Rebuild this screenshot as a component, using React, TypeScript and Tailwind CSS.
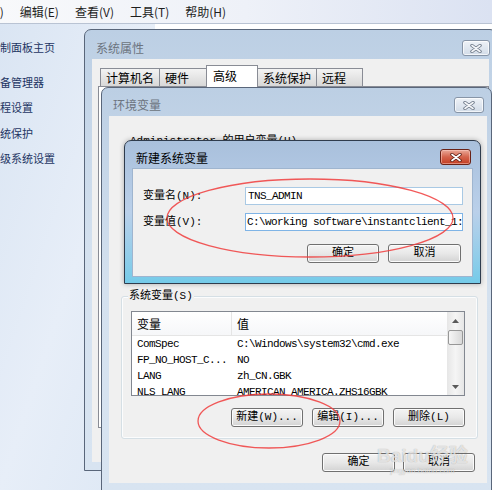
import type { ReactNode } from 'react';

const cjk = "font-['Noto_Sans_CJK_SC',sans-serif]";
const song = "font-['Liberation_Mono','Noto_Sans_CJK_SC',monospace]";

function CloseButton({ active = false, className = '' }: { active?: boolean; className?: string }) {
  return (
    <div
      className={`flex items-center justify-center rounded-[3px] border ${
        active
          ? 'border-[#6a2216] bg-linear-to-b from-[#e9a898] via-[#d4634b] to-[#c23d22] shadow-[inset_0_0_0_1px_rgba(255,210,200,0.5)]'
          : 'border-[#8795a7] bg-linear-to-b from-[#eef2f7] to-[#d2dce8] shadow-[inset_0_0_0_1px_rgba(255,255,255,0.7)]'
      } ${className}`}
    >
      <svg width="14" height="9" viewBox="0 0 14 9">
        <path d="M3 1.5 L11 7.5 M11 1.5 L3 7.5" stroke={active ? '#5a1a10' : '#6b7686'} strokeWidth="3.4" strokeLinecap="round" />
        <path d="M3 1.5 L11 7.5 M11 1.5 L3 7.5" stroke={active ? '#ffffff' : '#f3f5f8'} strokeWidth="1.7" strokeLinecap="round" />
      </svg>
    </div>
  );
}

function Btn({ className = '', children }: { className?: string; children: ReactNode }) {
  return (
    <div
      className={`flex h-[19px] items-center justify-center rounded-[3px] border border-[#707070] bg-linear-to-b from-[#f4f4f4] via-[#e8e8e8] to-[#d3d3d3] text-[11px] leading-none text-black shadow-[inset_0_0_0_1px_#fbfbfb] ${song} ${className}`}
    >
      {children}
    </div>
  );
}

const sysVars = [
  { name: 'ComSpec', value: 'C:\\Windows\\system32\\cmd.exe' },
  { name: 'FP_NO_HOST_C...', value: 'NO' },
  { name: 'LANG', value: 'zh_CN.GBK' },
  { name: 'NLS_LANG', value: 'AMERICAN_AMERICA.ZHS16GBK' },
];

const tabClass =
  '-ml-px h-[18px] border border-b-0 border-[#898c95] bg-linear-to-b from-[#f3f3f3] to-[#d8d8d8] pl-[5px] leading-[17px]';

export default function App() {
  return (
    <div className={`relative h-[490px] w-[492px] overflow-hidden bg-white ${cjk}`}>
      {/* explorer menu bar */}
      <div className="flex h-[24px] items-center gap-[16px] border-b border-[#b9c3d3] bg-linear-to-r from-[#f8f9fb] via-[#eef1f8] to-[#dbe2f2] text-[12px] text-[#1e1e1e]">
        <span className="-ml-[35px]">文件(F)</span>
        <span>编辑(E)</span>
        <span>查看(V)</span>
        <span>工具(T)</span>
        <span>帮助(H)</span>
      </div>

      {/* control panel sidebar */}
      <div className="flex h-[466px]">
        <div className="w-[155px] bg-linear-to-br from-[#dae5f3] via-[#e7eef8] to-[#dce7f4] pt-[15px] text-[11px] text-[#1e3563]">
          <div className="-ml-[11px] leading-[16px]">控制面板主页</div>
          <div className="mt-[15px] flex flex-col">
            <div className="-ml-[11px] h-[25.3px] leading-[25px]">设备管理器</div>
            <div className="-ml-[11px] h-[25.3px] leading-[25px]">远程设置</div>
            <div className="-ml-[11px] h-[25.3px] leading-[25px]">系统保护</div>
            <div className="-ml-[11px] h-[25.3px] leading-[25px]">高级系统设置</div>
          </div>
        </div>
        <div className="flex-1 bg-white" />
      </div>

      {/* 系统属性 window */}
      <div className="absolute left-[84px] top-[29px] flex h-[442px] w-[413px] flex-col rounded-t-[7px] border border-[#59667a] bg-linear-to-b from-[#bccfe4] via-[#d4e1ef] to-[#d8e4f1]">
        <div className="flex h-[29px] shrink-0 items-start justify-between pl-[11px] pr-[6px]">
          <span className="mt-[11px] text-[12px] leading-[14px] text-[#6c7480]">系统属性</span>
          <CloseButton className="mt-[10px] h-[16px] w-[28px]" />
        </div>
        <div className="mx-[7px] h-[403px] bg-[#f0f0f0] pt-[6px]">
          <div className="flex h-[21px] items-end pl-[9px] text-[12px] text-black">
            <div className={`w-[60px] ${tabClass}`}>计算机名</div>
            <div className={`w-[48px] ${tabClass}`}>硬件</div>
            <div className="relative z-10 -mb-px -ml-px h-[22px] w-[52px] border border-b-0 border-[#898c95] bg-white pl-[6px] leading-[19px]">
              高级
            </div>
            <div className={`w-[60px] ${tabClass}`}>系统保护</div>
            <div className={`w-[47px] ${tabClass}`}>远程</div>
          </div>
          <div className="ml-[6px] h-[342px] border border-[#898c95] bg-white" />
        </div>
      </div>

      {/* 环境变量 window */}
      <div className="absolute left-[101px] top-[87px] flex h-[404px] w-[391px] flex-col rounded-t-[7px] border border-[#59667a] bg-linear-to-b from-[#bccfe4] via-[#d4e1ef] to-[#d8e4f1]">
        <div className="flex h-[28px] shrink-0 items-start justify-between pl-[11px] pr-[7px]">
          <span className="mt-[10px] text-[12px] leading-[14px] text-[#6c7480]">环境变量</span>
          <CloseButton className="mt-[9px] h-[16px] w-[30px]" />
        </div>
        <div className="ml-[7px] flex h-[367px] w-[378px] flex-col bg-[#f0f0f0]">
          <div className={`ml-[21px] mt-[18px] h-[14px] text-[11px] leading-[14px] text-black ${song}`}>
            Administrator 的用户变量(U)
          </div>
          <div className="h-[148px]" />

          {/* 系统变量 group */}
          <div className="relative ml-[12px] h-[143px] w-[357px] rounded-[3px] border border-[#d5dfe5] pl-[9px] pt-[14px] shadow-[inset_0_0_0_1px_#fbfcfd]">
            <span className={`absolute left-[6px] -top-[8px] bg-[#f0f0f0] px-px text-[11px] leading-[14px] text-black ${song}`}>
              系统变量(S)
            </span>
            <div className="flex h-[85px] w-[334px] border border-[#828790] bg-white">
              <div className="flex-1 overflow-hidden">
                <div className="flex h-[24px] border-b border-[#e5e5e5] bg-linear-to-b from-white to-[#f6f7f9] text-[12px] leading-[23px] text-black">
                  <div className="w-[100px] border-r border-[#e5e5e5] pl-[5px]">变量</div>
                  <div className="pl-[5px]">值</div>
                </div>
                {sysVars.map((v) => (
                  <div key={v.name} className={`flex h-[16px] text-[11px] leading-[16px] tracking-[-0.6px] text-black ${song}`}>
                    <div className="w-[100px] shrink-0 pl-[5px]">{v.name}</div>
                    <div className="whitespace-nowrap pl-[5px]">{v.value}</div>
                  </div>
                ))}
              </div>
              <div className="flex w-[17px] flex-col bg-linear-to-r from-[#e6e6e6] via-[#f5f5f5] to-[#e6e6e6]">
                <div className="flex h-[17px] items-center justify-center">
                  <svg width="7" height="4" viewBox="0 0 7 4">
                    <polygon points="0,4 3.5,0 7,4" fill="#5a5a5a" />
                  </svg>
                </div>
                <div className="mx-px mt-px h-[15px] rounded-[2px] border border-[#979797] bg-linear-to-r from-[#f6f6f6] to-[#d9d9d9]" />
                <div className="flex-1" />
                <div className="flex h-[17px] items-center justify-center">
                  <svg width="7" height="4" viewBox="0 0 7 4">
                    <polygon points="0,0 3.5,4 7,0" fill="#5a5a5a" />
                  </svg>
                </div>
              </div>
            </div>
            <div className="mt-[12px] flex w-[334px] justify-end gap-[9px]">
              <Btn className="w-[72px]">新建(W)...</Btn>
              <Btn className="w-[72px]">编辑(I)...</Btn>
              <Btn className="w-[72px]">删除(L)</Btn>
            </div>
          </div>

          <div className="mt-[14px] flex justify-end gap-[8px] pr-[12px]">
            <Btn className="w-[73px]">确定</Btn>
            <Btn className="w-[72px]">取消</Btn>
          </div>
        </div>
      </div>

      {/* 新建系统变量 window (active) */}
      <div className="absolute left-[124px] top-[140px] flex h-[144px] w-[357px] flex-col rounded-t-[7px] border border-[#2f3c4d] bg-linear-to-b from-[#a9c0dc] via-[#bad0ea] to-[#74cbe9] shadow-[0_0_5px_rgba(0,0,0,0.3)]">
        <div className="flex h-[27px] shrink-0 items-start justify-between pl-[11px] pr-[9px]">
          <span className="mt-[10px] text-[12px] leading-[14px] text-black">新建系统变量</span>
          <CloseButton active className="mt-[8px] h-[16px] w-[31px]" />
        </div>
        <div className={`ml-[7px] h-[109px] w-[341px] border border-[#9fb5cf] bg-[#f0f0f0] pt-[18px] text-[11px] text-black ${song}`}>
          <div className="flex h-[18px] items-center">
            <span className="ml-[10px] w-[102px]">变量名(N):</span>
            <div className="flex h-[18px] w-[218px] items-center border border-[#a9c9e4] bg-white pl-[2px] tracking-[-0.6px]">
              TNS_ADMIN
            </div>
          </div>
          <div className="mt-[8px] flex h-[18px] items-center">
            <span className="ml-[10px] w-[102px]">变量值(V):</span>
            <div className="flex h-[18px] w-[218px] items-center overflow-hidden whitespace-nowrap border border-[#7fb4e6] bg-white pl-[2px] tracking-[-0.6px]">
              <span className="mr-[-1px] h-[13px] w-px bg-black" />
              C:\working software\instantclient_1:
            </div>
          </div>
          <div className="mt-[13px] flex justify-end gap-[9px] pr-[11px]">
            <Btn className="w-[72px]">确定</Btn>
            <Btn className="w-[73px]">取消</Btn>
          </div>
        </div>
      </div>

      {/* hand-drawn red ellipses */}
      <svg className="pointer-events-none absolute inset-0" width="492" height="490" viewBox="0 0 492 490">
        <ellipse cx="310" cy="218" rx="143" ry="39" fill="none" stroke="#f03c3c" strokeWidth="1.3" opacity="0.85" />
        <ellipse cx="269" cy="421" rx="71" ry="27" fill="none" stroke="#f03c3c" strokeWidth="1.3" opacity="0.85" />
      </svg>

      {/* watermark */}
      <div className="pointer-events-none absolute left-[377px] top-[446px] flex flex-col items-center text-white/70 [text-shadow:0_0_1px_rgba(0,0,0,0.35)]">
        <span className="font-['Liberation_Sans','Noto_Sans_CJK_SC',sans-serif] text-[19px] font-bold leading-[20px]">Baidu经验</span>
        <span className="font-['Liberation_Sans',sans-serif] text-[8px] leading-[9px]">jingyan.baidu.com</span>
      </div>
    </div>
  );
}
